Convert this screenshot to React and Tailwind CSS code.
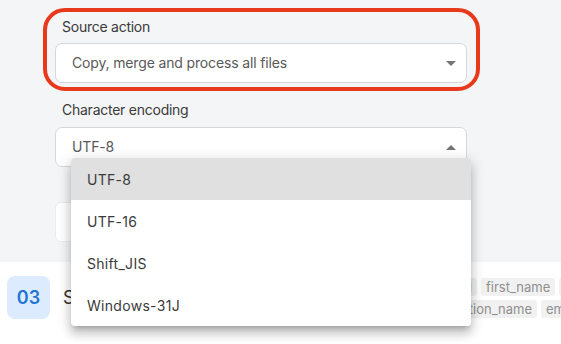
import React from "react";

const Caret = ({ up }) => (
  <svg width="10" height="5" viewBox="0 0 10 5" className="shrink-0">
    <path d={up ? "M0 5 L5 0 L10 5 Z" : "M0 0 L5 5 L10 0 Z"} fill="#757575" />
  </svg>
);

function Select({ value, open }) {
  return (
    <div className="flex h-[40px] w-[412px] items-center justify-between rounded-[7px] border border-[#d7d7d7] bg-white pl-[16px] pr-[10px]">
      <span className="text-[14px] leading-[24px] tracking-[-0.15px] text-[#595959]">{value}</span>
      <Caret up={open} />
    </div>
  );
}

const Tag = ({ children }) => (
  <span className="shrink-0 rounded-[3px] bg-[#f1f1f1] px-[5px] text-[13px] leading-[18px] text-[#8f8f8f]">
    {children}
  </span>
);

export default function App() {
  const options = ["UTF-8", "UTF-16", "Shift_JIS", "Windows-31J"];

  return (
    <div className="relative h-[344px] w-full overflow-hidden bg-white font-[Inter,sans-serif]">
      {/* form area */}
      <div className="h-[262px] bg-[#f4f5f6] pt-[8px]">
        <div className="ml-[43px] w-[437px] rounded-[22px] border-[4px] border-[#e8391d] pb-[4px] pl-[8px] pr-[9px] pt-[5px]">
          <div className="mb-[6px] pl-[7px] text-[14px] leading-[20px] tracking-[-0.25px] text-[#3a3a3a]">Source action</div>
          <Select value="Copy, merge and process all files" />
        </div>

        <div className="ml-[55px] mt-[9px]">
          <div className="mb-[7px] pl-[7px] text-[14px] leading-[20px] tracking-[-0.25px] text-[#3a3a3a]">Character encoding</div>
          <Select value="UTF-8" open />
          <div className="mt-[35px] h-[40px] w-[412px] rounded-[6px] border border-[#ececec] bg-white" />
        </div>
      </div>

      {/* next step */}
      <div className="flex items-center pl-[7px] pt-[14px]">
        <div className="flex h-[43px] w-[43px] shrink-0 items-center justify-center rounded-[8px] bg-[#dcecfe] text-[18px] font-semibold text-[#2174d4]">
          03
        </div>
        <div className="ml-[13px] w-[237px] shrink-0 text-[18px] text-[#333]">Select columns</div>
        <div className="flex shrink-0 flex-col gap-[4px]">
          <div className="flex gap-[4px]">
            <div className="flex w-[177px] shrink-0 justify-end gap-[4px]">
              <Tag>id</Tag>
            </div>
            <Tag>first_name</Tag>
            <Tag>last_name</Tag>
          </div>
          <div className="flex gap-[4px]">
            <div className="flex w-[237px] shrink-0 justify-end gap-[4px]">
              <Tag>organization_name</Tag>
            </div>
            <Tag>email</Tag>
          </div>
        </div>
      </div>

      {/* open menu */}
      <div className="absolute left-[71px] top-[158px] w-[400px] overflow-hidden rounded-[4px] bg-white shadow-[0px_5px_5px_-3px_rgba(0,0,0,0.2),0px_8px_10px_1px_rgba(0,0,0,0.14),0px_3px_14px_2px_rgba(0,0,0,0.12)]">
        {options.map((o, i) => (
          <div
            key={o}
            className={`flex h-[42px] items-center pl-[16px] text-[14px] tracking-[0.3px] text-[#3a3a3a] ${
              i === 0 ? "bg-[#e0e0e0]" : ""
            }`}
          >
            {o}
          </div>
        ))}
      </div>
    </div>
  );
}
